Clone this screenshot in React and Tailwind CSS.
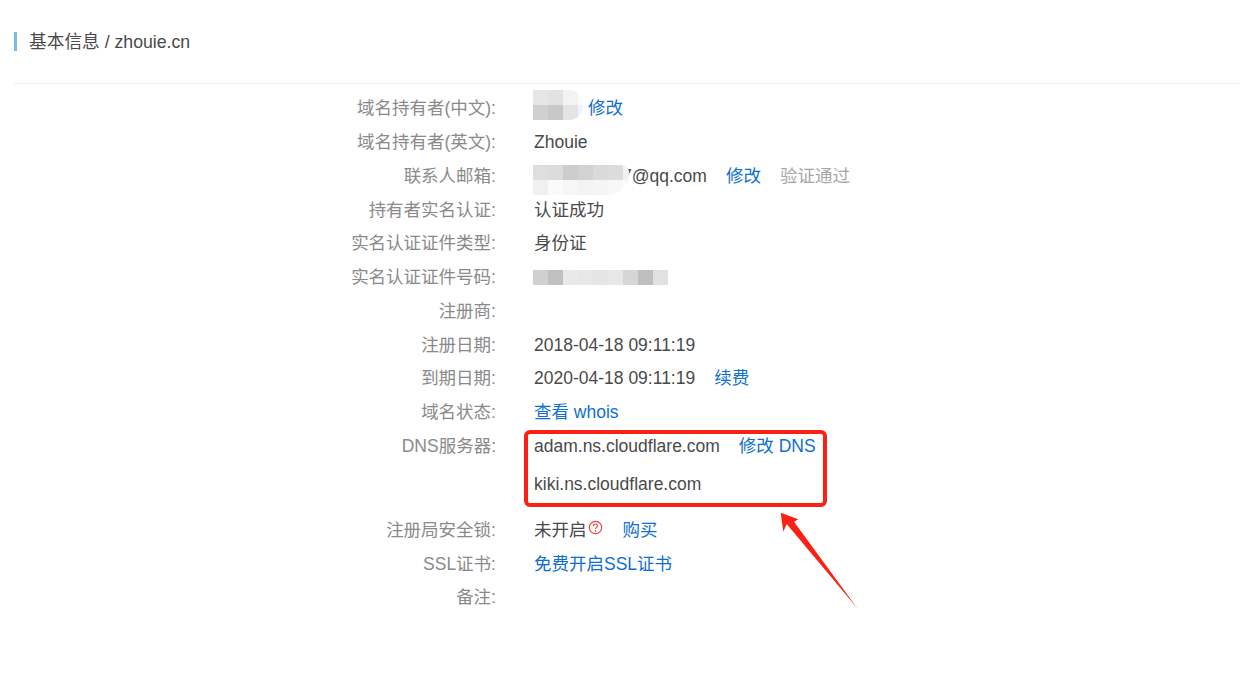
import React from 'react';

const font = '[font-family:"Liberation_Sans","Noto_Sans_CJK_SC",sans-serif]';

// Pixelated privacy blur over a value
const Mosaic = ({ rows, className }) => (
  <div className={`absolute flex flex-col overflow-hidden ${className}`}>
    {rows.map((row, i) => (
      <div key={i} className="flex h-[15px] shrink-0">
        {row.map((color, j) => (
          <div key={j} className="h-[15px] w-[15px] shrink-0" style={{ backgroundColor: color }} />
        ))}
      </div>
    ))}
  </div>
);

const Link = ({ children, className = '' }) => (
  <span className={`text-[#0f6fd0] ${className}`}>{children}</span>
);

const Row = ({ label, children, className = '' }) => (
  <div className={`flex ${className}`}>
    <div className="flex h-[33.75px] w-[482px] items-center justify-end text-[#8a8a8a]">{label}</div>
    <div className="ml-[38px]">{children}</div>
  </div>
);

const Line = ({ children, className = '' }) => (
  <div className={`flex h-[33.75px] items-center whitespace-nowrap ${className}`}>{children}</div>
);

const App = () => {
  return (
    <div className={`h-[675px] w-[1240px] overflow-hidden bg-white pl-[14px] text-[17.5px] text-[#4a4a4a] ${font}`}>
      <div className="flex h-[83px] items-start pt-[32px]">
        <div className="h-[19px] w-[3px] bg-[#7db9e8]" />
        <div className="ml-[12px] flex h-[20px] items-center text-[17.7px]">基本信息 / zhouie.cn</div>
      </div>
      <div className="h-px bg-[#eeeeee]" />

      <div className="relative mt-[7.5px]">
        <Row label="域名持有者(中文):">
          <Line className="relative pl-[54px]">
            <Mosaic
              className="left-[-1px] top-[-1.5px] h-[30px] w-[50px] rounded-r-[14px]"
              rows={[
                ['#e6e6e6', '#e2e2e2', '#f3f3f3', '#fbfbfb'],
                ['#d0d0d0', '#c8c8c8', '#e4e4e4', '#eef5fb'],
              ]}
            />
            <Link>修改</Link>
          </Line>
        </Row>
        <Row label="域名持有者(英文):"><Line>Zhouie</Line></Row>
        <Row label="联系人邮箱:">
          <Line className="relative">
            <span className="pl-[88px]">7@qq.com</span>
            <Link className="ml-[19px]">修改</Link>
            <span className="ml-[19px] text-[#a6a6a6]">验证通过</span>
            <Mosaic
              className="left-[-1px] top-[6px] h-[30px] w-[96px] rounded-br-[26px] rounded-tr-[8px]"
              rows={[
                ['#dedede', '#dcdcdc', '#cdcdcd', '#d2d2d2', '#dadada', '#dcdcdc', '#f2f2f2'],
                ['#f0f0f0', '#fafafa', '#f6f6f6', '#f3f3f3', '#f5f5f5', '#f8f8f8', '#fdfdfd'],
              ]}
            />
          </Line>
        </Row>
        <Row label="持有者实名认证:"><Line>认证成功</Line></Row>
        <Row label="实名认证证件类型:"><Line>身份证</Line></Row>
        <Row label="实名认证证件号码:">
          <Line className="relative">
            <Mosaic
              className="left-[-1px] top-[9.75px] h-[15px] w-[135px]"
              rows={[['#d0d0d0', '#c0c0c0', '#e9e9e9', '#e7e7e7', '#e5e5e5', '#e7e7e7', '#d6d6d6', '#bfbfbf', '#e1e1e1']]}
            />
          </Line>
        </Row>
        <Row label="注册商:"><Line /></Row>
        <Row label="注册日期:"><Line>2018-04-18 09:11:19</Line></Row>
        <Row label="到期日期:">
          <Line>
            2020-04-18 09:11:19
            <Link className="ml-[19px]">续费</Link>
          </Line>
        </Row>
        <Row label="域名状态:"><Line><Link>查看 whois</Link></Line></Row>
        <Row label="DNS服务器:" className="h-[84px]">
          <div className="relative">
            <Line>
              adam.ns.cloudflare.com
              <Link className="ml-[19px]">修改 DNS</Link>
            </Line>
            <Line className="mt-[4px]">kiki.ns.cloudflare.com</Line>
            {/* red annotation box */}
            <div className="absolute left-[-10px] top-[1px] h-[77px] w-[303px] rounded-[6px] border-[4px] border-[#fa2014]" />
          </div>
        </Row>
        <Row label="注册局安全锁:">
          <Line>
            未开启
            <svg width="15" height="15" viewBox="0 0 15 15" className="mb-[4px] ml-[1.5px]" fill="none">
              <circle cx="7.5" cy="7.5" r="6.2" stroke="#f5403a" strokeWidth="1.2" />
              <path d="M5.5 6c0-1.3 1-2 2-2s2 .7 2 1.9c0 1.5-2 1.5-2 3.1" stroke="#f5403a" strokeWidth="1.2" />
              <circle cx="7.5" cy="10.9" r=".8" fill="#f5403a" />
            </svg>
            <Link className="ml-[19.5px]">购买</Link>
          </Line>
        </Row>
        <Row label="SSL证书:"><Line><Link>免费开启SSL证书</Link></Line></Row>
        <Row label="备注:"><Line /></Row>
      </div>

      {/* red annotation arrow */}
      <svg className="absolute left-0 top-0" width="1240" height="675" fill="none">
        <path d="M780.7 512.7 L798.3 519.3 L794 521.7 L857.3 608.3 L786.7 524 L783.3 531.7 Z" fill="#fa2014" />
      </svg>
    </div>
  );
};

export default App;
